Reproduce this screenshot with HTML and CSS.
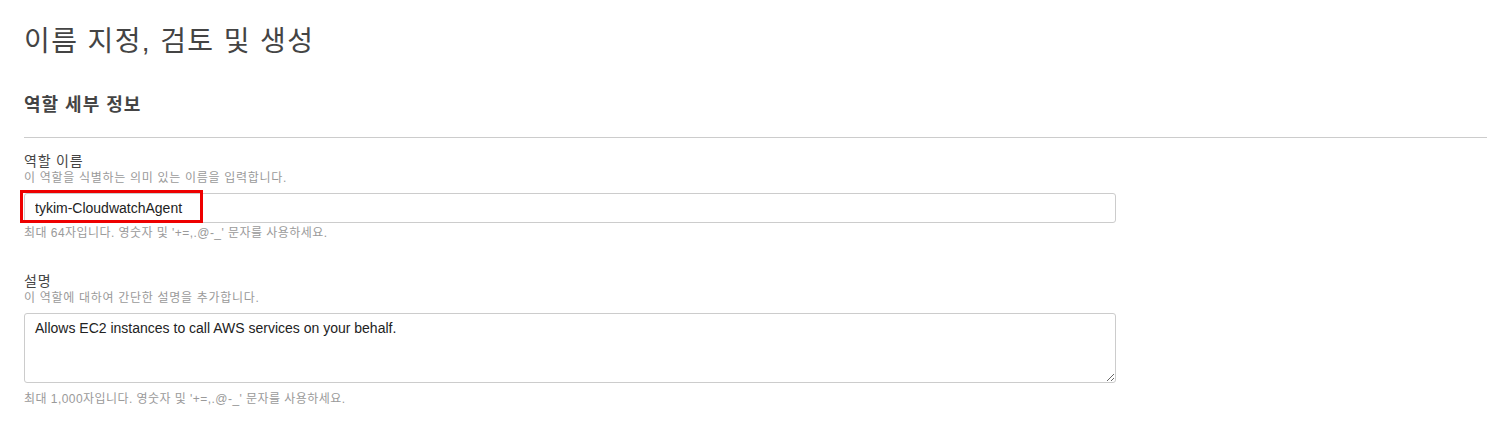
FILE: index.html
```html
<!DOCTYPE html>
<html lang="ko">
<head>
<meta charset="utf-8">
<title>이름 지정, 검토 및 생성</title>
<link rel="stylesheet" href="styles.css">
</head>
<body>
<div class="page">
  <h1 class="title">이름 지정, 검토 및 생성</h1>
  <h2 class="section">역할 세부 정보</h2>

  <div class="field field-name">
    <div class="label">역할 이름</div>
    <div class="hint">이 역할을 식별하는 의미 있는 이름을 입력합니다.</div>
    <div class="input-wrap">
      <input class="input" type="text" value="tykim-CloudwatchAgent">
      <span class="highlight"></span>
    </div>
    <div class="note">최대 64자입니다. 영숫자 및 '+=,.@-_' 문자를 사용하세요.</div>
  </div>

  <div class="field field-desc">
    <div class="label">설명</div>
    <div class="hint">이 역할에 대하여 간단한 설명을 추가합니다.</div>
    <textarea class="textarea">Allows EC2 instances to call AWS services on your behalf.</textarea>
    <div class="note note-desc">최대 1,000자입니다. 영숫자 및 '+=,.@-_' 문자를 사용하세요.</div>
  </div>
</div>
</body>
</html>
```

FILE: styles.css
```css
html, body {
  margin: 0;
  padding: 0;
  background: #ffffff;
}

body {
  font-family: "Liberation Sans", "Noto Sans CJK KR", sans-serif;
  color: #444444;
}

.page {
  padding: 22px 5px 0 24px;
}

.title {
  margin: 0;
  font-size: 28px;
  font-weight: normal;
  line-height: 40px;
  letter-spacing: 1.4px;
  color: #444444;
}

.section {
  margin: 31px 0 0 0;
  padding-bottom: 20px;
  border-bottom: 1px solid #cccccc;
  font-size: 18px;
  font-weight: bold;
  line-height: 24px;
  letter-spacing: 1px;
  color: #444444;
}

.field {
  display: flex;
  flex-direction: column;
  align-items: flex-start;
}

.field-name {
  margin-top: 14px;
}

.field-desc {
  margin-top: 31px;
}

.label {
  font-size: 14px;
  line-height: 18px;
  letter-spacing: 0.8px;
  color: #444444;
}

.hint {
  font-size: 12px;
  line-height: 16px;
  letter-spacing: 0.7px;
  color: #9a9a9a;
}

.input-wrap {
  position: relative;
  margin-top: 7px;
  width: 1092px;
}

.input {
  display: block;
  box-sizing: border-box;
  width: 1092px;
  height: 30px;
  margin: 0;
  padding: 0 10px;
  border: 1px solid #cccccc;
  border-radius: 3px;
  font-family: "Liberation Sans", "Noto Sans CJK KR", sans-serif;
  font-size: 14px;
  color: #222222;
  background: #ffffff;
  outline: none;
}

.highlight {
  position: absolute;
  left: -4px;
  top: -3px;
  width: 183px;
  height: 33px;
  box-sizing: border-box;
  border: 3px solid #ee0000;
  pointer-events: none;
}

.note {
  margin-top: 2px;
  font-size: 12px;
  line-height: 16px;
  letter-spacing: 0.45px;
  color: #9a9a9a;
}

.textarea {
  display: block;
  box-sizing: border-box;
  width: 1092px;
  height: 70px;
  margin: 7px 0 0 0;
  padding: 4px 10px;
  border: 1px solid #cccccc;
  border-radius: 3px;
  font-family: "Liberation Sans", "Noto Sans CJK KR", sans-serif;
  font-size: 14px;
  line-height: 20px;
  color: #222222;
  background: #ffffff;
  outline: none;
}

.note-desc {
  margin-top: 8px;
}
```
